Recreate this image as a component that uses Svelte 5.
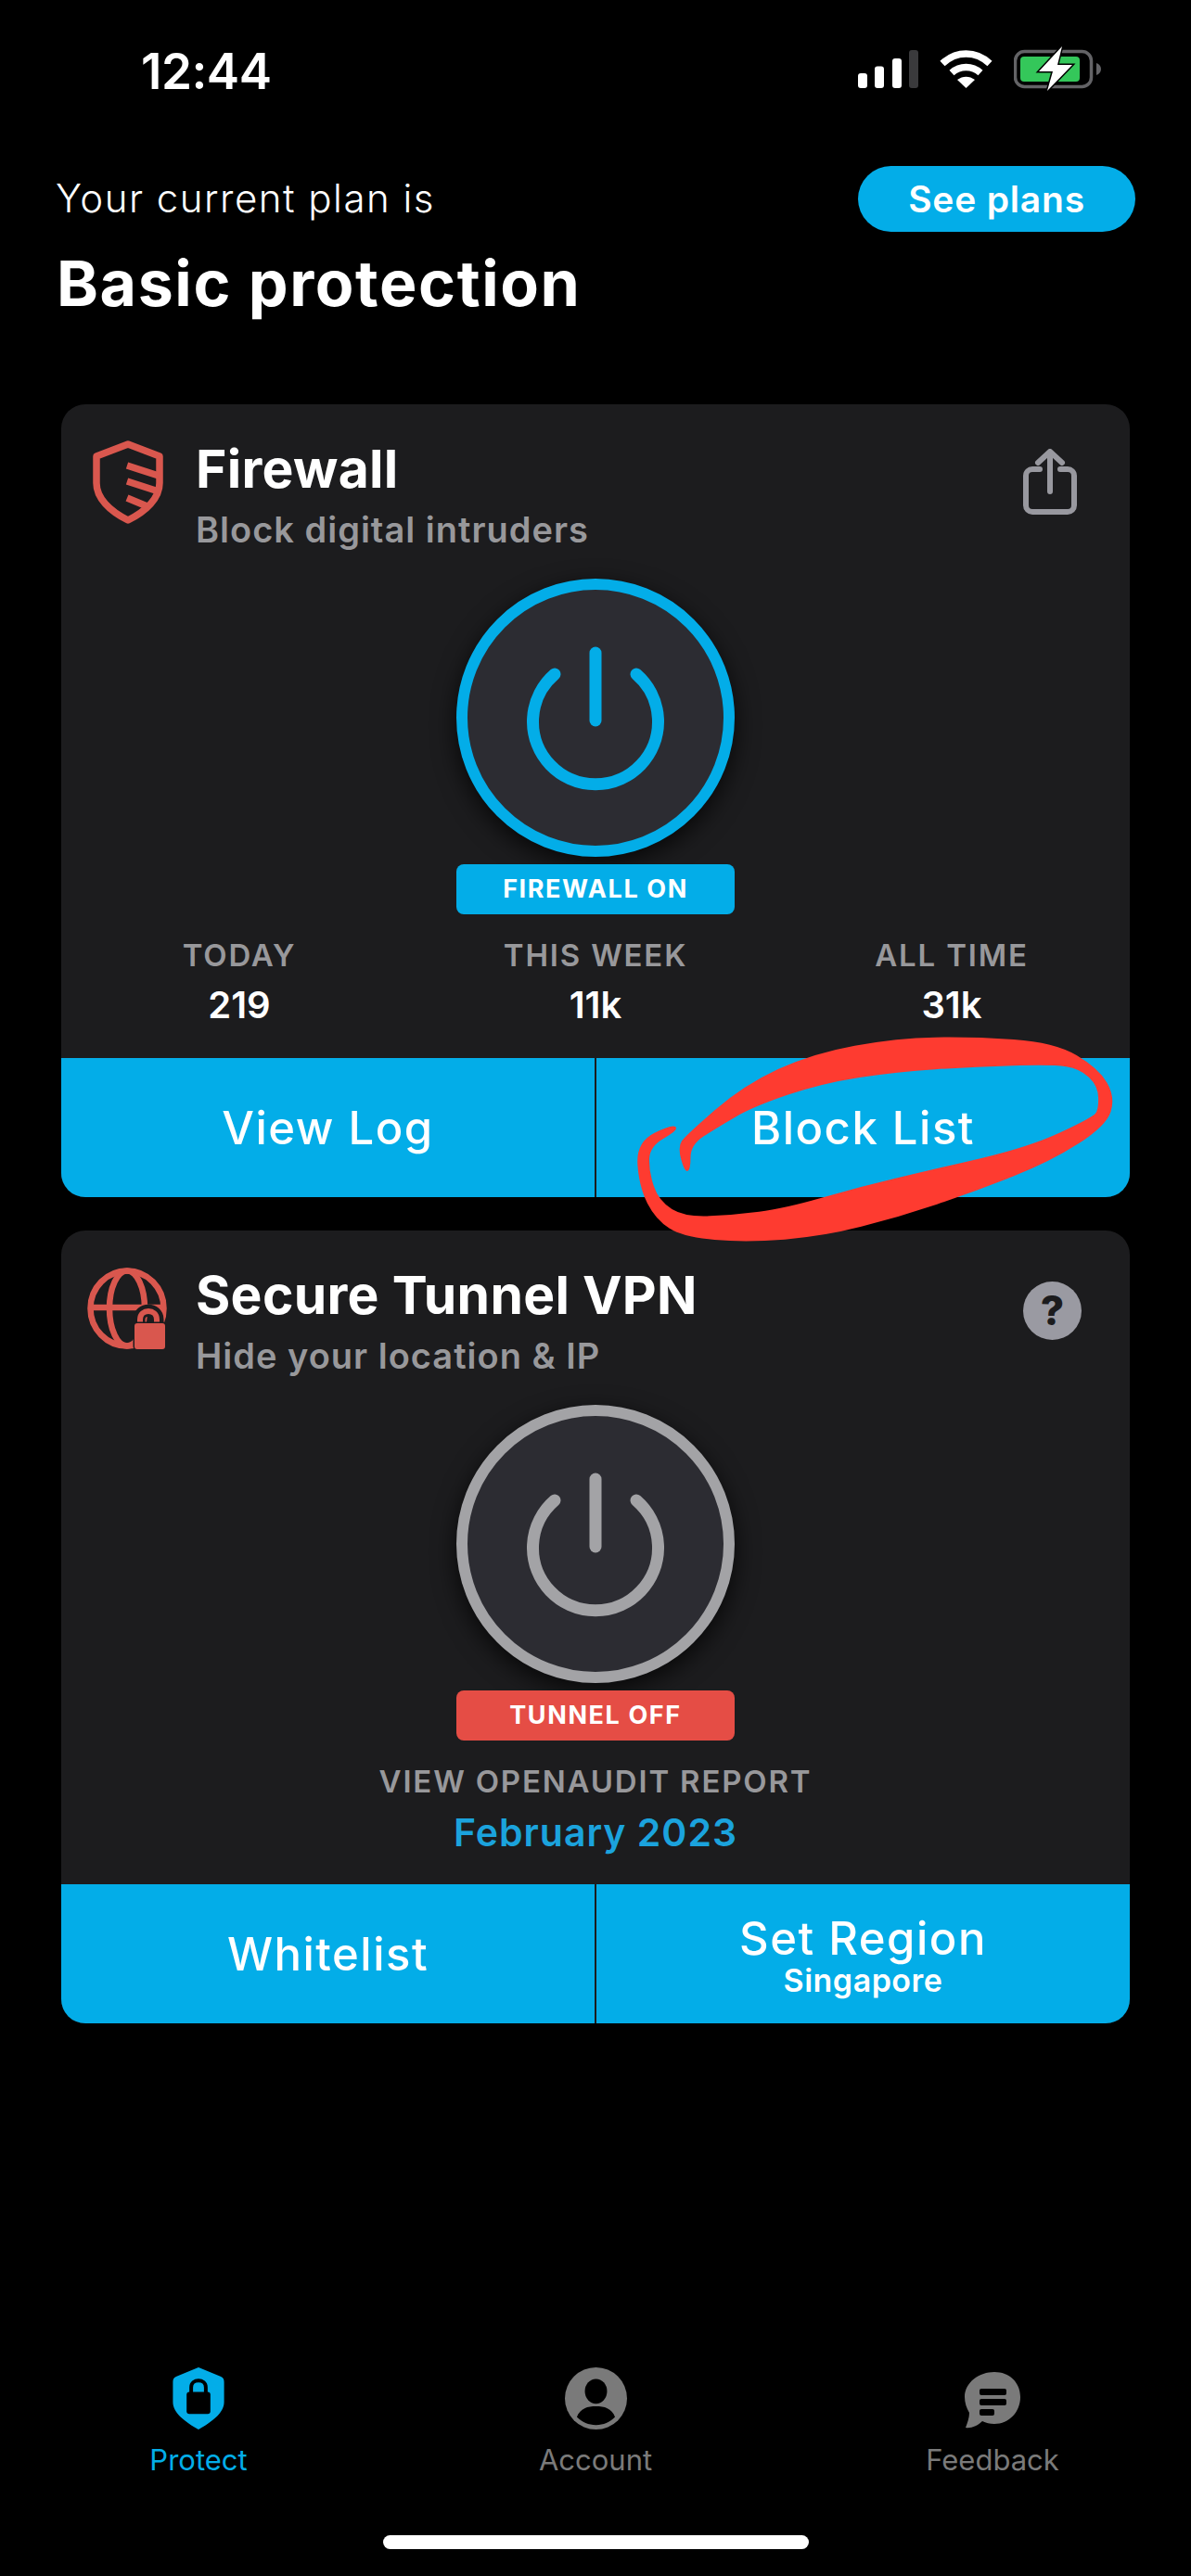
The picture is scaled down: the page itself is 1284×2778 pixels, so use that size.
<script>
	const stats = [
		{ label: 'TODAY', value: '219' },
		{ label: 'THIS WEEK', value: '11k' },
		{ label: 'ALL TIME', value: '31k' }
	];

	// outline of the red marker scribble, traced over the Block List button
	const scribble = [
		[338, 522], [320, 440], [342, 402], [495, 240], [675, 138], [900, 88], [1100, 84], [1315, 102],
		[1432, 186], [1476, 280], [1452, 372], [1305, 488], [1105, 585], [905, 667], [705, 730], [500, 750],
		[335, 732], [262, 676], [218, 570], [210, 426], [305, 366], [324, 385], [246, 438], [244, 520],
		[270, 616], [340, 668], [470, 660], [600, 640], [800, 570], [1000, 512], [1250, 440], [1414, 346],
		[1432, 320], [1430, 242], [1382, 188], [1310, 174], [1100, 182], [900, 197], [700, 235], [520, 310],
		[424, 378], [354, 434], [354, 515]
	];

	function smooth(points) {
		const mid = (a, b) => [(a[0] + b[0]) / 2, (a[1] + b[1]) / 2];
		const start = mid(points[points.length - 1], points[0]);
		let d = `M${start[0]} ${start[1]}`;
		points.forEach((p, i) => {
			const m = mid(p, points[(i + 1) % points.length]);
			d += `Q${p[0]} ${p[1]} ${m[0]} ${m[1]}`;
		});
		return d + 'Z';
	}
</script>

{#snippet power(color)}
	<div class="power" style="border-color: {color}">
		<svg width="148" height="158" viewBox="0 0 148 158" fill="none" stroke={color} stroke-width="13" stroke-linecap="round">
			<path d="M74 7V80" />
			<path d="M30 30A67.5 67.5 0 1 0 118 30" />
		</svg>
	</div>
{/snippet}

<div class="page">
	<div class="status">
		<span class="time">12:44</span>
		<div class="status-icons">
			<svg width="65" height="41" viewBox="0 0 65 41">
				<rect x="0" y="25" width="10" height="16" rx="3" fill="#fff" />
				<rect x="18" y="17.500" width="10" height="23.500" rx="3" fill="#fff" />
				<rect x="37" y="9" width="10" height="32" rx="3" fill="#fff" />
				<rect x="55" y="0" width="10" height="41" rx="3" fill="#3a3a3c" />
			</svg>
			<svg width="57" height="41" viewBox="0 0 57 41" fill="none" stroke="#fff" stroke-width="7.500">
				<path d="M3 14.500C18 .5 39 .5 54 14.500" />
				<path d="M13 24.500C22 16.500 35 16.500 44 24.500" />
				<path d="M19 32L28.500 41L38 32C32 27.500 25 27.500 19 32Z" fill="#fff" stroke="none" />
			</svg>
			<svg width="94" height="48" viewBox="0 0 94 48">
				<rect x="1.500" y="5.500" width="82" height="38" rx="10" fill="none" stroke="#636366" stroke-width="3.500" />
				<rect x="7" y="11" width="64" height="27" rx="4" fill="#34c75a" />
				<path d="M89 18C92 19 94 21.500 94 24.500S92 30 89 31Z" fill="#636366" />
				<path d="M52 0L27 27H42L36 48L63 20H47Z" fill="#fff" stroke="#000" stroke-width="3" paint-order="stroke" />
			</svg>
		</div>
	</div>

	<header class="plan">
		<div class="plan-text">
			<p class="plan-label">Your current plan is</p>
			<h1>Basic protection</h1>
		</div>
		<button class="see-plans">See plans</button>
	</header>

	<section class="card">
		<div class="card-head">
			<svg class="card-icon" width="76" height="90" viewBox="0 0 76 90" fill="none" stroke="#d9574e" stroke-width="7.500" stroke-linejoin="round">
				<path d="M38 4L72 17V46C72 62 58 76 38 86C18 76 4 62 4 46V17Z" />
				<path d="M37 27L71 38M37 44L71 55M37 62L61 72" />
			</svg>
			<div class="titles">
				<h2>Firewall</h2>
				<p>Block digital intruders</p>
			</div>
			<svg class="card-action" width="58" height="72" viewBox="0 0 58 72" fill="none" stroke="#98989f" stroke-width="6" stroke-linecap="round" stroke-linejoin="round">
				<path d="M18 22H10C6 22 3 25 3 29V61C3 65 6 68 10 68H48C52 68 55 65 55 61V29C55 25 52 22 48 22H40" />
				<path d="M29 46V4M16 15L29 3L42 15" />
			</svg>
		</div>
		<div class="toggle">
			{@render power('#03ade8')}
			<div class="badge on">FIREWALL ON</div>
		</div>
		<div class="stats">
			{#each stats as stat}
				<div class="stat">
					<span class="stat-label">{stat.label}</span>
					<span class="stat-value">{stat.value}</span>
				</div>
			{/each}
		</div>
		<div class="actions">
			<button>View Log</button>
			<button>Block List</button>
		</div>
	</section>

	<section class="card">
		<div class="card-head">
			<svg class="card-icon globe" width="86" height="88" viewBox="0 0 86 88" fill="none" stroke="#d9574e" stroke-width="6.500">
				<ellipse cx="43" cy="44" rx="39.500" ry="40.500" />
				<ellipse cx="43" cy="44" rx="19" ry="40.500" />
				<path d="M4 43H82" />
				<path d="M56 61V56C56 43 76 43 76 56V61" stroke="#1c1c1e" stroke-width="13" />
				<path d="M57 62V56C57 44 75 44 75 56V62" stroke-width="6" />
				<rect x="51" y="60" width="33" height="28" rx="3" fill="#d9574e" stroke="#1c1c1e" stroke-width="3" paint-order="stroke" />
			</svg>
			<div class="titles">
				<h2>Secure Tunnel VPN</h2>
				<p>Hide your location &amp; IP</p>
			</div>
			<div class="help">?</div>
		</div>
		<div class="toggle">
			{@render power('#a3a3a6')}
			<div class="badge off">TUNNEL OFF</div>
		</div>
		<div class="audit">
			<span class="stat-label">VIEW OPENAUDIT REPORT</span>
			<span class="audit-date">February 2023</span>
		</div>
		<div class="actions">
			<button>Whitelist</button>
			<button class="stacked"><span>Set Region</span><small>Singapore</small></button>
		</div>
	</section>

	<nav class="tabs">
		<div class="tab active">
			<svg width="56" height="68" viewBox="0 0 56 68">
				<path d="M28 0L52 10C55 11 56 13 56 16V38C56 50 42 60 28 68C14 60 0 50 0 38V16C0 13 1 11 4 10Z" fill="#03ade8" />
				<path d="M20 28V22C20 12 36 12 36 22V28" fill="none" stroke="#000" stroke-width="4" />
				<rect x="15" y="27" width="26" height="24" rx="3" fill="#000" />
			</svg>
			<span>Protect</span>
		</div>
		<div class="tab">
			<svg width="71" height="70" viewBox="0 0 71 70">
				<circle cx="35.500" cy="35" r="35" fill="#7a7a7a" />
				<ellipse cx="35.500" cy="27" rx="12.500" ry="14" fill="#000" />
				<path d="M14 56C18 46 26 44 35.500 44S53 46 57 56C51 62 44 65 35.500 65S20 62 14 56Z" fill="#000" />
			</svg>
			<span>Account</span>
		</div>
		<div class="tab">
			<svg width="60" height="62" viewBox="0 0 60 62">
				<path d="M32 0C48 0 60 11 60 27S48 56 32 56C27 56 23 55 19 53C14 58 7 61 1 60C3 55 5 49 5 44C2 39 0 33 0 27C0 11 16 0 32 0Z" fill="#7a7a7a" />
				<rect x="16" y="18" width="29" height="7" rx="2" fill="#000" />
				<rect x="16" y="29" width="29" height="7" rx="2" fill="#000" />
				<rect x="16" y="40" width="16" height="7" rx="2" fill="#000" />
			</svg>
			<span>Feedback</span>
		</div>
	</nav>

	<div class="home-bar"></div>

	<svg class="scribble" width="640" height="260" viewBox="0 0 1568 780" preserveAspectRatio="none">
		<path d={smooth(scribble)} fill="#fe3b30" />
	</svg>
</div>

<style>
	:global(body) {
		background: #000;
	}

	.page {
		position: relative;
		box-sizing: border-box;
		width: 1284px;
		height: 2778px;
		overflow: hidden;
		display: flex;
		flex-direction: column;
		background: #000;
		color: #fff;
		font-family: Inter, 'Liberation Sans', sans-serif;
	}

	.status {
		display: flex;
		justify-content: space-between;
		align-items: center;
		height: 48px;
		padding: 50px 97px 0 152px;
	}

	.time {
		margin-top: 5px;
		font-size: 53px;
		font-weight: 600;
		letter-spacing: -0.5px;
	}

	.status-icons {
		display: flex;
		align-items: center;
		gap: 23px;
	}

	.plan {
		display: flex;
		justify-content: space-between;
		align-items: flex-start;
		height: 257px;
		padding: 81px 60px 0;
	}

	.plan-text {
		padding-top: 10px;
	}

	.plan-label {
		margin: 0;
		font-size: 42px;
		font-weight: 300;
		letter-spacing: 1.5px;
		line-height: 50px;
	}

	h1 {
		margin: 27px 0 0 1px;
		font-size: 68px;
		font-weight: 700;
		line-height: 78px;
		letter-spacing: 1.6px;
	}

	.see-plans {
		width: 299px;
		height: 71px;
		border: none;
		border-radius: 36px;
		background: #03ade8;
		color: #fff;
		font: 600 39px Inter, sans-serif;
		letter-spacing: 0.8px;
	}

	.card {
		box-sizing: border-box;
		width: 1152px;
		height: 855px;
		margin: 0 0 36px 66px;
		border-radius: 26px;
		background: #1c1c1e;
		display: flex;
		flex-direction: column;
		overflow: hidden;
	}

	.card-head {
		display: flex;
		align-items: flex-start;
		height: 188px;
		padding: 39px 48px 0 34px;
		box-sizing: border-box;
		position: relative;
	}

	.card-icon {
		flex: none;
		margin-right: 35px;
	}

	.card-icon.globe {
		margin: 1px 31px 0 -6px;
	}

	.titles {
		flex: 1;
		margin-top: -2px;
	}

	h2 {
		margin: 0;
		font-size: 57px;
		font-weight: 700;
		line-height: 66px;
		letter-spacing: 0.3px;
	}

	.titles p {
		margin: 10px 0 0;
		font-size: 38px;
		font-weight: 600;
		letter-spacing: 1px;
		line-height: 44px;
		color: #98989b;
	}

	.card-action {
		margin: 9px 9px 0 0;
	}

	.help {
		width: 63px;
		height: 63px;
		margin: 16px 4px 0 0;
		border-radius: 50%;
		background: #9a9aa2;
		color: #1c1c1e;
		font-size: 44px;
		font-weight: 800;
		line-height: 63px;
		text-align: center;
	}

	.toggle {
		display: flex;
		flex-direction: column;
		align-items: center;
		gap: 8px;
	}

	.power {
		box-sizing: border-box;
		width: 300px;
		height: 300px;
		border: 12px solid;
		border-radius: 50%;
		background: #2c2c32;
		box-shadow: 0 8px 26px rgba(0, 0, 0, 0.75);
		display: flex;
		justify-content: center;
		padding-top: 61px;
	}

	.badge {
		width: 300px;
		height: 54px;
		border-radius: 8px;
		font-size: 27px;
		font-weight: 700;
		letter-spacing: 1.6px;
		line-height: 54px;
		text-align: center;
	}

	.badge.on {
		background: #03ade8;
	}

	.badge.off {
		background: #e54d45;
	}

	.stats {
		display: grid;
		grid-template-columns: repeat(3, 1fr);
		flex: 1;
		padding-top: 22px;
	}

	.stat,
	.audit {
		display: flex;
		flex-direction: column;
		align-items: center;
	}

	.stat-label {
		font-size: 33px;
		font-weight: 600;
		letter-spacing: 1.8px;
		line-height: 44px;
		color: #98989b;
	}

	.stat-value {
		margin-top: 7px;
		font-size: 40px;
		font-weight: 600;
		line-height: 50px;
	}

	.audit {
		flex: 1;
		padding-top: 22px;
	}

	.audit-date {
		margin-top: 8px;
		font-size: 41px;
		font-weight: 600;
		letter-spacing: 1px;
		line-height: 50px;
		color: #1ba3dd;
	}

	.actions {
		display: grid;
		grid-template-columns: 1fr 1fr;
		gap: 2px;
		height: 150px;
		background: #1c1c1e;
	}

	.actions button {
		border: none;
		background: #03ade8;
		color: #fff;
		font: 500 49px Inter, sans-serif;
		letter-spacing: 1.5px;
		padding: 0;
	}

	.actions .stacked {
		display: flex;
		flex-direction: column;
		align-items: center;
		justify-content: center;
		padding-top: 10px;
	}

	.stacked span {
		line-height: 44px;
	}

	.stacked small {
		margin-top: 4px;
		font-size: 34px;
		font-weight: 600;
		letter-spacing: 0.5px;
		line-height: 38px;
	}

	.tabs {
		display: grid;
		grid-template-columns: repeat(3, 1fr);
		margin-top: 335px;
		width: 1284px;
		height: 181px;
	}

	.tab {
		display: flex;
		flex-direction: column;
		align-items: center;
		justify-content: flex-end;
		gap: 15px;
		height: 118px;
		font-size: 31px;
		color: #7a7a7a;
	}

	.tab span {
		line-height: 36px;
	}

	.tab.active {
		color: #03ade8;
	}

	.home-bar {
		align-self: center;
		width: 459px;
		height: 15px;
		border-radius: 8px;
		background: #fff;
	}

	.scribble {
		position: absolute;
		left: 600px;
		top: 1090px;
		pointer-events: none;
	}
</style>
